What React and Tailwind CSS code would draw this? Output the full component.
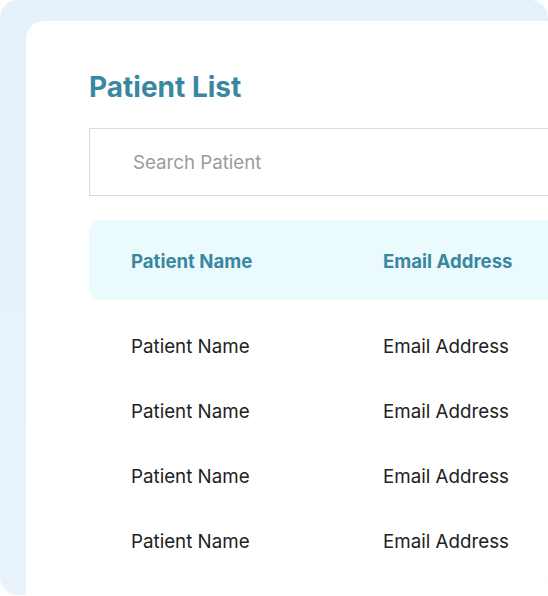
export default function App() {
  const rows = [1, 2, 3, 4];
  return (
    <div className="w-[548px] h-[596px] bg-white" style={{ fontFamily: "Inter, 'Noto Sans', sans-serif" }}>
      <div className="w-[548px] h-[595px] rounded-[18px] bg-gradient-to-b from-[#e5f2fb] to-[#e8f3fb] pl-[26px] pt-[21px] flex overflow-hidden">
        <div className="flex-1 bg-white rounded-tl-[18px] pl-[63px] pt-[49px] overflow-hidden">
          <h1 className="text-[28px] leading-[34px] font-bold text-[#3a87a1]">Patient List</h1>
          <div className="mt-[24px] h-[68px] border border-[#d9d9d9] border-r-0 flex items-center pl-[43px] pt-[2px]">
            <span className="text-[18.7px] text-[#9b9b9b]">Search Patient</span>
          </div>
          <div className="mt-[24px] h-[80px] bg-[#ebfafd] rounded-l-[12px] flex items-center pl-[42px] pt-[3px]">
            <span className="w-[252px] text-[18.6px] font-bold text-[#3a87a1]">Patient Name</span>
            <span className="text-[18.6px] font-bold text-[#3a87a1]">Email Address</span>
          </div>
          <div className="pt-[15px]">
            {rows.map((r) => (
              <div key={r} className="h-[65px] flex items-center pl-[42px] text-[18.75px] text-[#222222]">
                <span className="w-[252px]">Patient Name</span>
                <span>Email Address</span>
              </div>
            ))}
          </div>
        </div>
      </div>
    </div>
  );
}
